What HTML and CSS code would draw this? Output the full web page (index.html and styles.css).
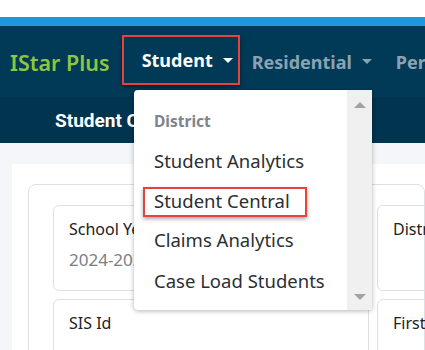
FILE: index.html
```html
<!DOCTYPE html>
<html>
<head>
    <title>IStar Plus - Student</title>
    <link rel="stylesheet" href="styles.css">
</head>
<body>
    <div class="top-gap"></div>
    <div class="accent"></div>
    <nav class="navbar">
        <span class="brand">IStar Plus</span>
        <a class="nav-link active">Student <span class="caret"></span></a>
        <a class="nav-link">Residential <span class="caret"></span></a>
        <a class="nav-link">Personnel <span class="caret"></span></a>
    </nav>
    <div class="subbar">
        <span class="page-title">Student Central</span>
    </div>
    <div class="content">
        <div class="panel">
            <div class="card">
                <div class="field">
                    <div class="field-label">School Year</div>
                    <div class="field-value">2024-2025</div>
                </div>
                <div class="field">
                    <div class="field-label">District</div>
                </div>
                <div class="field">
                    <div class="field-label">SIS Id</div>
                </div>
                <div class="field">
                    <div class="field-label">First Name</div>
                </div>
            </div>
        </div>
    </div>

    <div class="dropdown">
        <div class="dropdown-items">
            <div class="dropdown-header">District</div>
            <a class="dropdown-item">Student Analytics</a>
            <a class="dropdown-item highlight">Student Central</a>
            <a class="dropdown-item">Claims Analytics</a>
            <a class="dropdown-item">Case Load Students</a>
        </div>
        <div class="scrollbar">
            <span class="arrow-up"></span>
            <span class="arrow-down"></span>
        </div>
    </div>
</body>
</html>
```

FILE: styles.css
```css
body {
    margin: 0;
    width: 425px;
    height: 350px;
    overflow: hidden;
    font-family: "Noto Sans", "Open Sans", sans-serif;
    background-color: #f4f6f9;
    position: relative;
}
.top-gap {
    height: 17px;
    background-color: #fff;
}
.accent {
    height: 9px;
    background-color: #1a9ad6;
}
.navbar {
    height: 71px;
    background-color: #003a57;
    display: flex;
    align-items: center;
    padding-left: 10px;
    white-space: nowrap;
    overflow: hidden;
}
.brand {
    color: #8dc63f;
    font-size: 21.5px;
    font-weight: 600;
    width: 102px;
    margin-right: 12px;
    margin-top: 2px;
}
.nav-link {
    display: flex;
    align-items: center;
    color: #8aa3b3;
    font-size: 18px;
    font-weight: 700;
    padding: 0 12px;
}
.nav-link.active {
    color: #fff;
    height: 46px;
    width: 96px;
    padding: 0 5px 0 18px;
    margin-top: -3px;
    border: 2px solid #e8423f;
    box-shadow: 0 2px 4px rgba(0, 0, 0, 0.4);
}
.caret {
    display: inline-block;
    margin-left: 10px;
    border-top: 5px solid currentColor;
    border-left: 5px solid transparent;
    border-right: 5px solid transparent;
}
.subbar {
    height: 46px;
    background-color: #01344f;
    display: flex;
    align-items: center;
    padding-left: 55px;
}
.page-title {
    color: #fff;
    font-family: Roboto, sans-serif;
    font-size: 19px;
    font-weight: 700;
}
.content {
    padding: 21px 0 0 12px;
}
.panel {
    background-color: #fff;
    padding: 20px 0 0 16px;
    height: 200px;
}
.card {
    border: 1px solid #dcdfe3;
    border-radius: 8px;
    padding: 20px 0 0 24px;
    display: grid;
    grid-template-columns: 316px 316px;
    grid-auto-rows: 86px;
    gap: 8px;
    height: 200px;
}
.field {
    border: 1px solid #dcdfe3;
    border-radius: 6px;
    padding: 12px 15px;
}
.field-label {
    color: #222;
    font-size: 16px;
}
.field-value {
    color: #7a7f85;
    font-size: 17px;
    margin-top: 8px;
}
.dropdown {
    position: absolute;
    left: 134px;
    top: 90px;
    width: 238px;
    height: 220px;
    background-color: #fff;
    border-radius: 4px;
    box-shadow: 0 1px 5px rgba(0, 0, 0, 0.3);
    display: flex;
}
.dropdown-items {
    flex: 1;
    padding: 20px 0 0 20px;
}
.dropdown-header {
    color: #7d848b;
    font-size: 15.5px;
    font-weight: 700;
    height: 38px;
}
.dropdown-item {
    display: block;
    color: #2b2f33;
    font-size: 18.5px;
    height: 40.5px;
    line-height: 26px;
}
.dropdown-item.highlight {
    margin-left: -11px;
    padding-left: 9px;
    width: 151px;
    height: 26px;
    line-height: 24px;
    border: 2px solid #e8423f;
    box-shadow: 0 2px 4px rgba(0, 0, 0, 0.35);
    margin-top: -2px;
    margin-bottom: 10.5px;
}
.scrollbar {
    width: 25px;
    background-color: #f0f0f0;
    display: flex;
    flex-direction: column;
    justify-content: space-between;
    align-items: center;
    padding: 12px 0 10px;
}
.arrow-up {
    border-bottom: 6px solid #a3a3a3;
    border-left: 6px solid transparent;
    border-right: 6px solid transparent;
}
.arrow-down {
    border-top: 6px solid #a3a3a3;
    border-left: 6px solid transparent;
    border-right: 6px solid transparent;
}
```
